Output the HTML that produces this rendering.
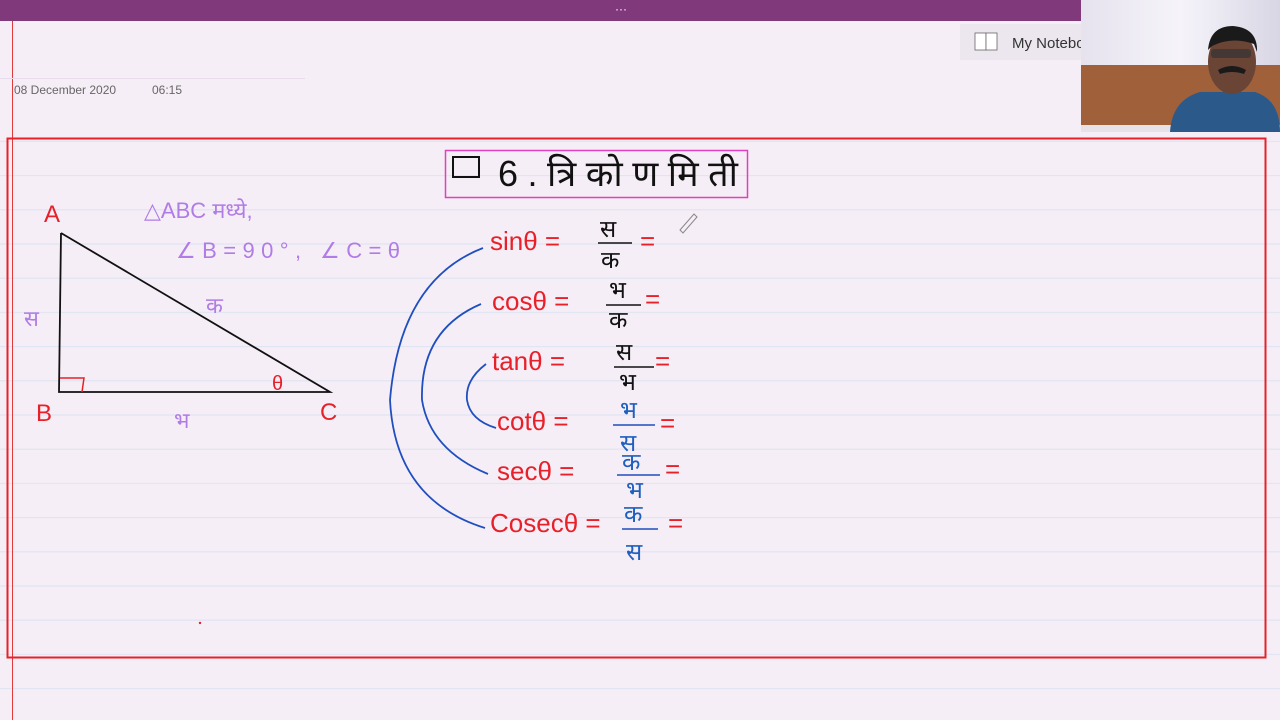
<!DOCTYPE html>
<html><head><meta charset="utf-8"><style>
html,body{margin:0;padding:0;width:1280px;height:720px;overflow:hidden;background:#f6eef6;font-family:"Liberation Sans",sans-serif}
svg{position:absolute;left:0;top:0}
</style></head><body>
<svg width="1280" height="720" viewBox="0 0 1280 720" xmlns="http://www.w3.org/2000/svg">
<defs>
<pattern id="rule" x="0" y="4" width="1280" height="34.2" patternUnits="userSpaceOnUse">
<rect width="1280" height="1.2" fill="#dfe5f2"/>
</pattern>
<linearGradient id="cam" x1="0" y1="0" x2="1" y2="0"><stop offset="0" stop-color="#e6e2ee"/><stop offset="0.5" stop-color="#f6f4fa"/><stop offset="1" stop-color="#d8d6e4"/></linearGradient>
</defs>
<rect x="0" y="140" width="1280" height="580" fill="url(#rule)"/>
<rect x="0" y="0" width="1280" height="21" fill="#80397b"/>
<text x="621" y="13" fill="#fff" font-size="12" text-anchor="middle">···</text>
<line x1="12.5" y1="21" x2="12.5" y2="720" stroke="#e03a3a" stroke-width="1"/>
<line x1="0" y1="78.5" x2="305" y2="78.5" stroke="#e8dcea"/>
<text x="14" y="94" font-size="12" fill="#666">08 December 2020</text>
<text x="152" y="94" font-size="12" fill="#666">06:15</text>
<rect x="960" y="24" width="125" height="36" fill="#ece6ee"/>
<rect x="975" y="33" width="11" height="17" fill="#fff" stroke="#666" stroke-width="0.8"/>
<rect x="986" y="33" width="11" height="17" fill="#fff" stroke="#666" stroke-width="0.8"/>
<text x="1012" y="48" font-size="15" fill="#333">My Notebo</text>
<!-- webcam -->
<rect x="1081" y="0" width="199" height="132" fill="url(#cam)"/>
<rect x="1081" y="65" width="199" height="62" fill="#a0603a"/>
<rect x="1081" y="125" width="199" height="7" fill="#e6e2e8"/>
<path d="M1170 132 Q1172 100 1200 92 L1255 92 Q1280 100 1280 132 Z" fill="#2b5a8a"/>
<ellipse cx="1232" cy="62" rx="24" ry="32" fill="#6a4535"/>
<path d="M1208 50 Q1210 26 1233 26 Q1258 28 1257 52 L1254 44 Q1232 36 1212 46 Z" fill="#1a1a1a"/>
<rect x="1211" y="49" width="40" height="9" rx="3" fill="#333" opacity="0.7"/>
<path d="M1218 70 Q1232 62 1246 70 L1244 74 Q1232 70 1220 74Z" fill="#1a1a1a"/>
<!-- page frame -->
<rect x="7.5" y="138.5" width="1258" height="519" fill="none" stroke="#e8202a" stroke-width="2"/>
<!-- title -->
<rect x="445.5" y="150.5" width="302" height="47" fill="none" stroke="#e040c0" stroke-width="1.5"/>
<rect x="453" y="157" width="26" height="20" fill="none" stroke="#111" stroke-width="2"/>
<text x="498" y="186" font-size="36" fill="#111" textLength="240" lengthAdjust="spacing">6.त्रिकोणमिती</text>
<!-- triangle -->
<g stroke="#111" stroke-width="1.8" fill="none">
<path d="M61 233 L59 392 L330 392 L61 233"/>
</g>
<path d="M60 378 L84 378 L82 392" stroke="#e8202a" stroke-width="1.5" fill="none"/>
<g fill="#e8202a" font-size="24">
<text x="44" y="222">A</text><text x="36" y="421">B</text><text x="320" y="420">C</text>
<text x="272" y="390" font-size="20">θ</text>
</g>
<g fill="#b07ce6" font-size="22">
<text x="144" y="218">△ABC मध्ये,</text>
<text x="176" y="258" textLength="224" lengthAdjust="spacing">∠B=90°, ∠C=θ</text>
<text x="206" y="313">क</text><text x="24" y="326">स</text><text x="174" y="428">भ</text>
</g>
<!-- arcs -->
<g stroke="#1f4fbf" stroke-width="1.8" fill="none">
<path d="M483 248 Q400 280 390 400 Q395 500 485 528"/>
<path d="M481 304 Q420 330 422 400 Q430 450 488 474"/>
<path d="M486 364 Q465 380 467 400 Q470 420 496 428"/>
</g>
<g fill="#e8202a" font-size="26">
<text x="490" y="250">sinθ =</text>
<text x="492" y="310">cosθ =</text>
<text x="492" y="370">tanθ =</text>
<text x="497" y="430">cotθ =</text>
<text x="497" y="480">secθ =</text>
<text x="490" y="532">Cosecθ =</text>
<text x="640" y="250">=</text><text x="645" y="308">=</text><text x="655" y="370">=</text>
<text x="660" y="432">=</text><text x="665" y="478">=</text><text x="668" y="532">=</text>
</g>
<g stroke="#111" stroke-width="1.5"><line x1="598" y1="243" x2="632" y2="243"/><line x1="606" y1="305" x2="641" y2="305"/><line x1="614" y1="367" x2="654" y2="367"/></g>
<g stroke="#1f4fbf" stroke-width="1.5"><line x1="613" y1="425" x2="655" y2="425"/><line x1="617" y1="475" x2="660" y2="475"/><line x1="622" y1="529" x2="658" y2="529"/></g>
<g fill="#111" font-size="24">
<text x="600" y="237">स</text><text x="601" y="268">क</text>
<text x="609" y="298">भ</text><text x="609" y="328">क</text>
<text x="616" y="360">स</text><text x="619" y="390">भ</text>
</g>
<g fill="#1f5fbf" font-size="24">
<text x="620" y="418">भ</text><text x="620" y="451">स</text>
<text x="622" y="470">क</text><text x="626" y="498">भ</text>
<text x="624" y="522">क</text><text x="626" y="560">स</text>
</g>
<path d="M680 230 L694 214 L697 217 L683 233 Z" fill="none" stroke="#888" stroke-width="1"/>
<circle cx="200" cy="623" r="1.2" fill="#e8202a"/>
</svg>
</body></html>
